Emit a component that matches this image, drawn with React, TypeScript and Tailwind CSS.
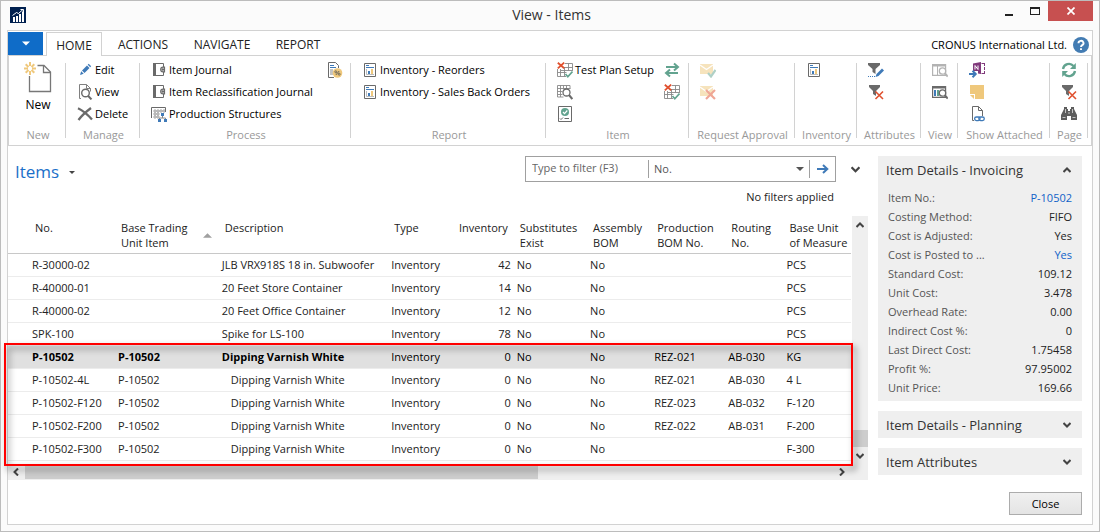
import type { ReactNode } from "react";

type IconProps = { children: ReactNode; box?: string; className?: string };

function Svg({ children, box = "0 0 16 16", className = "h-4 w-4" }: IconProps) {
  return (
    <svg viewBox={box} className={`shrink-0 ${className}`} fill="none" aria-hidden="true">
      {children}
    </svg>
  );
}

const GREY = "#6a6a6a";
const BLUE = "#3f7ab8";
const TEAL = "#62a38f";
const RED = "#e0512f";
const SAND = "#efc87c";

const LogoIcon = () => (
  <Svg>
    <rect width="16" height="16" fill="#00204f" />
    <path d="M3 10h2v5H3zM6 9h2v6H6zM9 7h2v8H9zM12 4.500h2V15h-2z" fill="#fff" />
    <path d="M2.500 8.500 6.500 5.500 8.500 6.500 13 2.500M10.500 2.500H13.500V5" stroke="#fff" />
  </Svg>
);

const NewIcon = () => (
  <Svg box="0 0 28 32" className="h-8 w-7">
    <path d="M13.500 3.500h6.500l6.500 6.500v19.500H5.500V14" stroke="#777" strokeWidth="1.300" />
    <path d="M19.500 3.500v7h7" stroke="#777" strokeWidth="1.300" />
    <path d="M6 0v4M6 9v4M0 6.500h4M8 6.500h4M1.700 2.200l2.800 2.800M7.500 8l2.800 2.800M10.300 2.200 7.500 5M4.500 8l-2.800 2.800" stroke={SAND} strokeWidth="2" />
  </Svg>
);

const EditIcon = () => (
  <Svg>
    <path d="m3 13 1.200-3.700 2.500 2.500zM5 8.500 10 3.500l2.500 2.500-5 5zM10.700 2.800l1-1 2.500 2.500-1 1z" fill={BLUE} />
  </Svg>
);

const ViewIcon = () => (
  <Svg>
    <path d="M4 14.500H2.500V.5h7l4 4v3M9.500.5v4h4" stroke="#808080" />
    <circle cx="8.500" cy="9" r="3.800" stroke={GREY} strokeWidth="1.400" fill="#fff" />
    <path d="m11 11.700 3.500 3.700" stroke={GREY} strokeWidth="2" />
  </Svg>
);

const DeleteIcon = () => (
  <Svg>
    <path d="M1 2.200C5 4 11 9 15 13.500M14 2C10 5 5 9 1.500 14" stroke={GREY} strokeWidth="2.300" />
  </Svg>
);

const JournalIcon = () => (
  <Svg>
    <path d="M2.500 1.500h10v12h-10z" stroke={GREY} />
    <path d="M2 1h3v13H2z" fill={GREY} />
    <path d="M13.500 5.200H12a2.300 2.300 0 0 0 0 4.600h1.500z" fill="#fff" stroke={GREY} strokeWidth="1.200" />
    <circle cx="11.800" cy="7.500" r="1.300" fill={GREY} />
  </Svg>
);

const StructureIcon = () => (
  <Svg>
    <path d="M.5 12V1.500h14V6" stroke={GREY} />
    <path d="M3 4h2v2H3zM6 4h2v2H6zM9 4h2v2H9zM12 4h2v2h-2zM3 7h2v2H3zM6 7h2v2H6zM3 10h2v2H3zM6 10h2v2H6z" stroke="#888" strokeWidth=".7" />
    <path d="M11.500 9.500v2.500M8.500 14v-2h6v2" stroke="#888" />
    <path d="M10 7h3v3h-3zM7 13h3v3H7zM13 13h3v3h-3z" fill={BLUE} />
  </Svg>
);

const PercentIcon = () => (
  <Svg>
    <path d="M7 15.500H1.500V.5h7l3 3V6" stroke={GREY} />
    <path d="M3 3.500h4M3 5.500h6" stroke={BLUE} />
    <path d="M3 8h3M3 10h3M3 12h3" stroke="#888" />
    <circle cx="10.500" cy="11" r="4.800" fill={SAND} />
    <circle cx="8.800" cy="9.800" r="1" stroke="#555" strokeWidth=".8" />
    <circle cx="12.200" cy="12.200" r="1" stroke="#555" strokeWidth=".8" />
    <path d="m8.800 13 3.400-4" stroke="#555" strokeWidth=".9" />
  </Svg>
);

const ReportIcon = () => (
  <Svg>
    <path d="M2.500 1.500h11v13h-11z" stroke={GREY} />
    <path d="M4 3.500h3M4 5.500h8" stroke={BLUE} />
    <path d="M4.500 7v5.500H12" stroke="#aaa" strokeWidth=".8" />
    <path d="M6 9h2v3H6z" fill={BLUE} />
    <path d="M9 7h2v5H9z" fill={SAND} />
  </Svg>
);

const PlanIcon = () => (
  <Svg>
    <path d="M.5 7v7.500H9M8 1.500h7.500V9M.5 10.500h9M3.500 7v7.500M7.500 5v9.500M11.500 1.500v7M6 5.500h9.500M4 8.500h11" stroke="#888" strokeWidth=".9" />
    <path d="m.8.8 6.400 5.400M7.200.6.800 6.400" stroke={RED} strokeWidth="1.800" />
    <path d="m8.500 12 2.300 2.700L15.500 9.500" stroke={TEAL} strokeWidth="1.700" />
  </Svg>
);

const TableSearchIcon = () => (
  <Svg>
    <path d="M.5 1.500h12.500v3M.5 1.500v11.500h6M.5 4.500h13M.5 7.500h5M.5 10.500h5M3.500 1.500v11.500M6.500 1.500v4M9.500 1.500v3" stroke="#888" strokeWidth=".9" />
    <circle cx="9.500" cy="8.500" r="3.500" stroke={GREY} strokeWidth="1.300" fill="#fff" />
    <path d="m12 11 3.300 4" stroke={GREY} strokeWidth="2" />
  </Svg>
);

const ApprovedIcon = () => (
  <Svg>
    <path d="M1.500.5h13v15h-13z" stroke={GREY} />
    <circle cx="8" cy="6" r="4" fill={TEAL} />
    <path d="M6 6l1.500 1.600L10.300 4.500" stroke="#fff" strokeWidth="1.200" />
    <path d="m3 12.500 1 1 2-2M7.500 12.500H12" stroke={GREY} />
  </Svg>
);

const SwapIcon = () => (
  <Svg>
    <path d="M2 5h11M14 11H3" stroke={TEAL} strokeWidth="2" />
    <path d="m10 1.500 4 3.500-4 3.500M6 7.500 2 11l4 3.500" stroke={TEAL} strokeWidth="2" />
  </Svg>
);

const MailIcon = ({ rejected = false }: { rejected?: boolean }) => (
  <Svg className="h-4 w-4 opacity-50">
    <path d="M0 2h13v10H0z" fill={SAND} />
    <path d="m0 3 6.500 4.500L13 3" stroke="#fff" strokeWidth="1.200" />
    {rejected ? (
      <path d="m6 6 9 9M15 6l-9 9" stroke={RED} strokeWidth="2.200" />
    ) : (
      <path d="M8 11 11 14.500 15.500 8" stroke={TEAL} strokeWidth="2.200" />
    )}
  </Svg>
);

const FilterEditIcon = () => (
  <Svg>
    <path d="M0 1h12v2L7.500 7v5l-3-2V7L0 3z" fill={GREY} />
    <path d="M0 14.500h8" stroke={BLUE} strokeDasharray="1 1" />
    <path d="m7.500 15 1-3 5.500-5.500 2 2L10.500 14z" fill={BLUE} />
  </Svg>
);

const FilterClearIcon = () => (
  <Svg>
    <path d="M1 1h11v2L8 7v5l-3-2V7L1 3z" fill={GREY} />
    <path d="m7.500 7.500 7.500 7.500M15 7.500 7.500 15" stroke={RED} strokeWidth="1.600" />
  </Svg>
);

const WindowSearchIcon = ({ active = false }: { active?: boolean }) => (
  <Svg className={active ? "h-4 w-4" : "h-4 w-4 opacity-50"}>
    <path d="M.6 2.500h13v10.900H.6z" stroke={GREY} strokeWidth="1.200" />
    <path d="M0 2h14v2.500H0z" fill={GREY} />
    {active && <path d="M2 6h2v6H2z" fill={BLUE} />}
    {active && <path d="M5 6h2v6H5z" fill={TEAL} />}
    {!active && <path d="M5.500 4v9" stroke={GREY} />}
    <circle cx="10.500" cy="9" r="3.200" stroke={GREY} strokeWidth="1.300" fill="#fff" />
    <path d="m12.800 11.500 3 3" stroke={GREY} strokeWidth="2" />
  </Svg>
);

const OneNoteIcon = () => (
  <Svg>
    <path d="M4 1.500 12 0v12l-3-.5V9H4z" fill="#80397b" />
    <path d="M6 7.500v-4l3 4v-4" stroke="#fff" />
    <path d="M12.500 1.500H15M12.500 11.500H15M15.500 1v3M15.500 5v3M15.500 9v3" stroke="#80397b" />
    <path d="M0 12h6M3.500 8.800 6.700 12l-3.200 3.200" stroke={BLUE} strokeWidth="2" />
  </Svg>
);

const NoteIcon = () => (
  <Svg>
    <path d="M1 1h14v14H6v-5H1z" fill={SAND} />
    <path d="M1 11h4v4z" fill={SAND} />
  </Svg>
);

const LinkPageIcon = () => (
  <Svg>
    <path d="M5 14.500H3.500V.5h6l4 4V10M9.500.5v4h4" stroke={GREY} />
    <rect x="5.600" y="11" width="5.500" height="3.600" rx="1.800" stroke={BLUE} strokeWidth="1.300" />
    <rect x="9.800" y="11" width="5.500" height="3.600" rx="1.800" stroke={BLUE} strokeWidth="1.300" />
  </Svg>
);

const RefreshIcon = () => (
  <Svg>
    <path d="M2 7a6 6 0 0 1 10.500-3M14 9a6 6 0 0 1-10.500 3" stroke={TEAL} strokeWidth="2.300" />
    <path d="M14.800 1v6H9zM1.200 15V9H7z" fill={TEAL} />
  </Svg>
);

const BinocularsIcon = () => (
  <Svg>
    <path d="M3 1h3v2h1v2h2V3h1V1h3v2l3 6v5h-6v-4H6v4H0V9l3-6z" fill="#5c5c5c" />
    <path d="M1.500 11.500h3M11.500 11.500h3M4.500 3v4M11.500 3v4M8 6v2" stroke="#ddd" strokeWidth=".8" />
  </Svg>
);

const HelpIcon = () => (
  <Svg>
    <circle cx="8" cy="8" r="8" fill="#437cb3" />
    <path d="M5.500 6.200a2.500 2.300 0 1 1 3.700 1.900C8.300 8.700 8 9 8 10M8 11.300v1.700" stroke="#fff" strokeWidth="1.900" />
  </Svg>
);

const Chevron = ({ dir, className = "h-2 w-2" }: { dir: "up" | "down" | "left" | "right"; className?: string }) => {
  const d = {
    up: "M0.500 6 4 2.500 7.500 6",
    down: "M0.500 2 4 5.500 7.500 2",
    left: "M6 .5 2.500 4 6 7.500",
    right: "M2 .5 5.500 4 2 7.500",
  }[dir];
  return (
    <Svg box="0 0 8 8" className={className}>
      <path d={d} stroke="#444" strokeWidth="2" />
    </Svg>
  );
};

const Triangle = ({ up = false, className }: { up?: boolean; className: string }) => (
  <Svg box="0 0 8 4" className={className}>
    <path d={up ? "M0 4 4 0l4 4z" : "M0 0h8L4 4z"} fill="currentColor" />
  </Svg>
);

type Command = { icon: ReactNode; label?: string; title: string; off?: boolean };

function Commands({ items, gap = "gap-0.5" }: { items: Command[]; gap?: string }) {
  return (
    <div className="flex flex-col items-start">
      {items.map((c, i) => (
        <button key={i} type="button" aria-label={c.title} disabled={c.off} className={`flex h-[22px] items-center whitespace-nowrap ${gap}`}>
          {c.icon}
          {c.label}
        </button>
      ))}
    </div>
  );
}

function Group({ name, size, children }: { name: string; size: string; children: ReactNode }) {
  return (
    <section aria-label={name} className={`flex shrink-0 ${size}`}>
      <div className="flex min-w-0 flex-1 flex-col pt-[3px]">
        <div className="flex h-[66px]">{children}</div>
        <div className="flex h-5 items-center justify-center whitespace-nowrap pl-0.5 text-[#999]">{name}</div>
      </div>
      <div className="mt-[7px] h-[75px] w-px bg-[#d2d2d2]" />
    </section>
  );
}

function Ribbon() {
  return (
    <div className="flex h-[91px] overflow-hidden border border-[#d2d2d2] bg-white">
      <Group name="New" size="w-[57px]">
        <button type="button" className="flex w-full flex-col items-center pl-0.5 pt-[3px]">
          <NewIcon />
          <span className="mt-[3px] text-[12px] leading-4">New</span>
        </button>
      </Group>
      <Group name="Manage" size="w-[74px]">
        <div className="pl-[11px]">
          <Commands
            items={[
              { icon: <EditIcon />, label: "Edit", title: "Edit" },
              { icon: <ViewIcon />, label: "View", title: "View" },
              { icon: <DeleteIcon />, label: "Delete", title: "Delete" },
            ]}
          />
        </div>
      </Group>
      <Group name="Process" size="w-[211px]">
        <div className="flex flex-1 justify-between pl-[11px] pr-[7px]">
          <Commands
            items={[
              { icon: <JournalIcon />, label: "Item Journal", title: "Item Journal" },
              { icon: <JournalIcon />, label: "Item Reclassification Journal", title: "Item Reclassification Journal" },
              { icon: <StructureIcon />, label: "Production Structures", title: "Production Structures" },
            ]}
          />
          <Commands items={[{ icon: <PercentIcon />, title: "Calculate Percent" }]} />
        </div>
      </Group>
      <Group name="Report" size="w-[195px]">
        <div className="pl-[11px]">
          <Commands
            items={[
              { icon: <ReportIcon />, label: "Inventory - Reorders", title: "Inventory - Reorders" },
              { icon: <ReportIcon />, label: "Inventory - Sales Back Orders", title: "Inventory - Sales Back Orders" },
            ]}
          />
        </div>
      </Group>
      <Group name="Item" size="w-[143px]">
        <div className="flex flex-1 justify-between pl-[11px] pr-2">
          <Commands
            items={[
              { icon: <PlanIcon />, label: "Test Plan Setup", title: "Test Plan Setup" },
              { icon: <TableSearchIcon />, title: "Find Plan" },
              { icon: <ApprovedIcon />, title: "Approved Plans" },
            ]}
          />
          <Commands
            items={[
              { icon: <SwapIcon />, title: "Exchange" },
              { icon: <PlanIcon />, title: "Plans" },
            ]}
          />
        </div>
      </Group>
      <Group name="Request Approval" size="w-[106px]">
        <div className="pl-[11px]">
          <Commands
            items={[
              { icon: <MailIcon />, title: "Send Approval Request", off: true },
              { icon: <MailIcon rejected />, title: "Cancel Approval Request", off: true },
            ]}
          />
        </div>
      </Group>
      <Group name="Inventory" size="w-[62px]">
        <div className="pl-[11px]">
          <Commands items={[{ icon: <ReportIcon />, title: "Inventory Report" }]} />
        </div>
      </Group>
      <Group name="Attributes" size="w-[64px]">
        <div className="pl-[11px]">
          <Commands
            items={[
              { icon: <FilterEditIcon />, title: "Filter by Attributes" },
              { icon: <FilterClearIcon />, title: "Clear Attributes Filter" },
            ]}
          />
        </div>
      </Group>
      <Group name="View" size="w-[37px]">
        <div className="pl-[11px]">
          <Commands
            items={[
              { icon: <WindowSearchIcon />, title: "Show as List", off: true },
              { icon: <WindowSearchIcon active />, title: "Show as Chart" },
            ]}
          />
        </div>
      </Group>
      <Group name="Show Attached" size="w-[92px]">
        <div className="pl-[11px]">
          <Commands
            items={[
              { icon: <OneNoteIcon />, title: "OneNote" },
              { icon: <NoteIcon />, title: "Notes" },
              { icon: <LinkPageIcon />, title: "Links" },
            ]}
          />
        </div>
      </Group>
      <Group name="Page" size="w-[38px]">
        <div className="pl-[11px]">
          <Commands
            items={[
              { icon: <RefreshIcon />, title: "Refresh" },
              { icon: <FilterClearIcon />, title: "Clear Filter" },
              { icon: <BinocularsIcon />, title: "Find" },
            ]}
          />
        </div>
      </Group>
    </div>
  );
}

type Row = { no: string; base?: string; desc: string; inv: number; bom?: string; routing?: string; unit: string; kind?: "main" | "child" };

const rows: Row[] = [
  { no: "R-30000-02", desc: "JLB VRX918S 18 in. Subwoofer", inv: 42, unit: "PCS" },
  { no: "R-40000-01", desc: "20 Feet Store Container", inv: 14, unit: "PCS" },
  { no: "R-40000-02", desc: "20 Feet Office Container", inv: 12, unit: "PCS" },
  { no: "SPK-100", desc: "Spike for LS-100", inv: 78, unit: "PCS" },
  { no: "P-10502", base: "P-10502", desc: "Dipping Varnish White", inv: 0, bom: "REZ-021", routing: "AB-030", unit: "KG", kind: "main" },
  { no: "P-10502-4L", base: "P-10502", desc: "Dipping Varnish White", inv: 0, bom: "REZ-021", routing: "AB-030", unit: "4 L", kind: "child" },
  { no: "P-10502-F120", base: "P-10502", desc: "Dipping Varnish White", inv: 0, bom: "REZ-023", routing: "AB-032", unit: "F-120", kind: "child" },
  { no: "P-10502-F200", base: "P-10502", desc: "Dipping Varnish White", inv: 0, bom: "REZ-022", routing: "AB-031", unit: "F-200", kind: "child" },
  { no: "P-10502-F300", base: "P-10502", desc: "Dipping Varnish White", inv: 0, unit: "F-300", kind: "child" },
];

function ItemTable() {
  const th = "pt-1 pl-1.5 align-top font-normal";
  const td = "pl-[3px]";
  return (
    <table className="w-full table-fixed border-collapse whitespace-nowrap text-left leading-[15px] text-[#222]">
      <colgroup>
        <col className="w-[12.7%]" />
        <col className="w-[12.3%]" />
        <col className="w-[20.1%]" />
        <col className="w-[7.7%]" />
        <col className="w-[7.2%]" />
        <col className="w-[8.7%]" />
        <col className="w-[7.6%]" />
        <col className="w-[8.8%]" />
        <col className="w-[6.9%]" />
        <col className="w-[8%]" />
      </colgroup>
      <thead>
        <tr className="h-[37px] border-b border-[#c8c8c8]">
          <th className="pl-[27px] pt-1 align-top font-normal">No.</th>
          <th className={th}>
            <span className="flex items-center justify-between pr-[7px]">
              <span>
                Base Trading
                <br />
                Unit Item
              </span>
              <Triangle up className="h-[5px] w-[9px] text-[#a0a0a0]" />
            </span>
          </th>
          <th className={th}>Description</th>
          <th className={th}>Type</th>
          <th className="pr-1.5 pt-1 text-right align-top font-normal">Inventory</th>
          <th className={th}>Substitutes<br />Exist</th>
          <th className={th}>Assembly<br />BOM</th>
          <th className={th}>Production<br />BOM No.</th>
          <th className={th}>Routing<br />No.</th>
          <th className={th}>Base Unit<br />of Measure</th>
        </tr>
      </thead>
      <tbody>
        {rows.map((r) => {
          const strong = r.kind === "main" ? "font-bold" : "";
          return (
            <tr key={r.no} className={`h-[23px] border-b border-[#ececec] ${r.kind === "main" ? "bg-[#e0e0e0] text-black" : ""}`}>
              <td className={`pl-6 ${strong}`}>{r.no}</td>
              <td className={`${td} ${strong}`}>{r.base}</td>
              <td className={`${r.kind === "child" ? "pl-3" : "pl-[3px]"} ${strong}`}>{r.desc}</td>
              <td className={td}>Inventory</td>
              <td className="pr-[3px] text-right">{r.inv}</td>
              <td className={td}>No</td>
              <td className={td}>No</td>
              <td className={td}>{r.bom}</td>
              <td className={td}>{r.routing}</td>
              <td className={td}>{r.unit}</td>
            </tr>
          );
        })}
      </tbody>
    </table>
  );
}

const facts: [string, string, boolean?][] = [
  ["Item No.:", "P-10502", true],
  ["Costing Method:", "FIFO"],
  ["Cost is Adjusted:", "Yes"],
  ["Cost is Posted to ...", "Yes", true],
  ["Standard Cost:", "109.12"],
  ["Unit Cost:", "3.478"],
  ["Overhead Rate:", "0.00"],
  ["Indirect Cost %:", "0"],
  ["Last Direct Cost:", "1.75458"],
  ["Profit %:", "97.95002"],
  ["Unit Price:", "169.66"],
];

function PanelHead({ title, open = false }: { title: string; open?: boolean }) {
  return (
    <button type="button" aria-expanded={open} className="flex h-[27px] w-full items-center justify-between bg-[#efefef] pl-2 pr-[11px] text-[13px] text-[#333]">
      {title}
      <Chevron dir={open ? "up" : "down"} />
    </button>
  );
}

export default function App() {
  return (
    <div className="flex min-h-screen flex-col border border-[#bcbcbc] bg-[#fbfbfb] font-['Open_Sans','Noto_Sans',sans-serif] text-[11px] leading-4 text-black">
      <header className="flex h-[29px] items-start justify-between pr-1.5">
        <div className="flex-1 pl-[9px] pt-1.5">
          <LogoIcon />
        </div>
        <h1 className="pt-1 text-[14px] leading-5 text-[#333]">View - Items</h1>
        <div className="flex flex-1 justify-end">
          <button type="button" aria-label="Minimize" className="flex h-5 w-[27px] items-center justify-center">
            <span className="mt-2 h-[2px] w-2 bg-[#222]" />
          </button>
          <button type="button" aria-label="Maximize" className="flex h-5 w-[26px] items-center justify-center">
            <span className="h-2 w-2.5 border border-t-2 border-[#222]" />
          </button>
          <button type="button" aria-label="Close window" className="flex h-5 w-[45px] items-center justify-center bg-[#c75050]">
            <Svg box="0 0 8 8" className="h-2 w-2">
              <path d="m.5.5 7 7m0-7-7 7" stroke="#fff" strokeWidth="1.700" />
            </Svg>
          </button>
        </div>
      </header>

      <div className="mx-1.5 mb-1.5 flex flex-1 flex-col border border-[#d2d2d2] bg-white">
        <nav className="flex h-6 items-stretch text-[12px]">
          <button type="button" aria-label="Application menu" className="mt-px flex w-[35px] items-center justify-center bg-[#0f6cc8] text-white">
            <Triangle className="h-[5px] w-2" />
          </button>
          <button type="button" className="relative z-10 -mb-px ml-[3px] mt-px w-14 border border-b-0 border-[#d2d2d2] bg-white pt-0.5 text-[#222]">HOME</button>
          <button type="button" className="w-[82px] pt-1 text-[#222]">ACTIONS</button>
          <button type="button" className="w-[76px] pt-1 text-[#222]">NAVIGATE</button>
          <button type="button" className="w-[76px] pt-1 text-[#222]">REPORT</button>
          <div className="ml-auto flex items-center gap-1.5 pr-[3px] pt-1">
            <span className="text-[11px]">CRONUS International Ltd.</span>
            <button type="button" aria-label="Help">
              <HelpIcon />
            </button>
          </div>
        </nav>
        <Ribbon />

        <div className="flex gap-2.5 pr-2.5 pt-2.5">
          <main className="min-w-0 flex-1">
            <div className="flex h-[26px] items-center justify-between pl-[7px] pr-2">
              <button type="button" className="flex items-center gap-2.5 pt-1.5 text-[17px] leading-6 text-[#1a6fc9]">
                Items
                <Triangle className="h-[3px] w-[6px] text-[#444]" />
              </button>
              <div className="flex items-center gap-[15px]">
                <form className="flex h-[26px] w-[311px] items-center border border-[#a0a0a0]">
                  <input type="text" aria-label="Type to filter" placeholder="Type to filter (F3)" className="w-[122px] pb-0.5 pl-1.5 outline-none placeholder:text-[#666]" />
                  <div className="relative flex h-[18px] flex-1 items-center border-x border-[#a0a0a0]">
                    <select aria-label="Filter field" className="w-full appearance-none bg-transparent pl-[5px] text-[#555] outline-none">
                      <option>No.</option>
                    </select>
                    <Triangle className="pointer-events-none absolute right-[5px] h-1 w-2 text-[#555]" />
                  </div>
                  <button type="button" aria-label="Apply filter" className="flex w-[25px] justify-center">
                    <Svg box="0 0 12 10" className="h-2.5 w-3">
                      <path d="M0 5h10M6 1l4.300 4L6 9" stroke={BLUE} strokeWidth="2" />
                    </Svg>
                  </button>
                </form>
                <button type="button" aria-label="Expand filters">
                  <Chevron dir="down" className="h-[9px] w-[9px]" />
                </button>
              </div>
            </div>
            <p className="mb-[11px] mt-[7px] pr-[34px] text-right text-[#222]">No filters applied</p>

            <div className="relative">
              <div className="flex">
                <div className="min-w-0 flex-1 pb-1">
                  <ItemTable />
                </div>
                <div className="ml-px flex w-4 flex-col items-center bg-[#efefef] py-[5px]">
                  <Chevron dir="up" />
                  <div className="mt-auto h-[17px] w-full bg-[#cdcdcd]" />
                  <Chevron dir="down" className="mt-[5px] h-2 w-2" />
                </div>
              </div>
              <div className="flex h-[15px] items-center bg-[#efefef] pl-1 pr-[22px]">
                <Chevron dir="left" />
                <div className="ml-[5px] mr-auto h-full w-[61.5%] border-b border-[#efefef] bg-[#cdcdcd]" />
                <Chevron dir="right" />
              </div>
              <div className="pointer-events-none absolute -left-1 bottom-3.5 right-[15px] top-[127px] border-2 border-[#ff0000] drop-shadow-[3px_4px_3px_rgba(0,0,0,0.5)]" />
            </div>
          </main>

          <aside className="flex w-[204px] shrink-0 flex-col gap-2.5">
            <section className="bg-[#efefef] pb-1">
              <PanelHead title="Item Details - Invoicing" open />
              <dl className="mt-[5px] px-2.5">
                {facts.map(([k, v, link]) => (
                  <div key={k} className="flex h-[19px] items-center justify-between">
                    <dt className="text-[#555]">{k}</dt>
                    <dd className="text-[#222]">
                      {link ? (
                        <a href="#" className="text-[#0f62c8]">
                          {v}
                        </a>
                      ) : (
                        v
                      )}
                    </dd>
                  </div>
                ))}
              </dl>
            </section>
            <PanelHead title="Item Details - Planning" />
            <PanelHead title="Item Attributes" />
          </aside>
        </div>

        <footer className="mt-auto flex justify-end pb-[9px] pr-2.5">
          <button type="button" className="h-[23px] w-[73px] border border-[#acacac] bg-linear-to-b from-[#f0f0f0] to-[#e4e4e4]">Close</button>
        </footer>
      </div>
    </div>
  );
}
